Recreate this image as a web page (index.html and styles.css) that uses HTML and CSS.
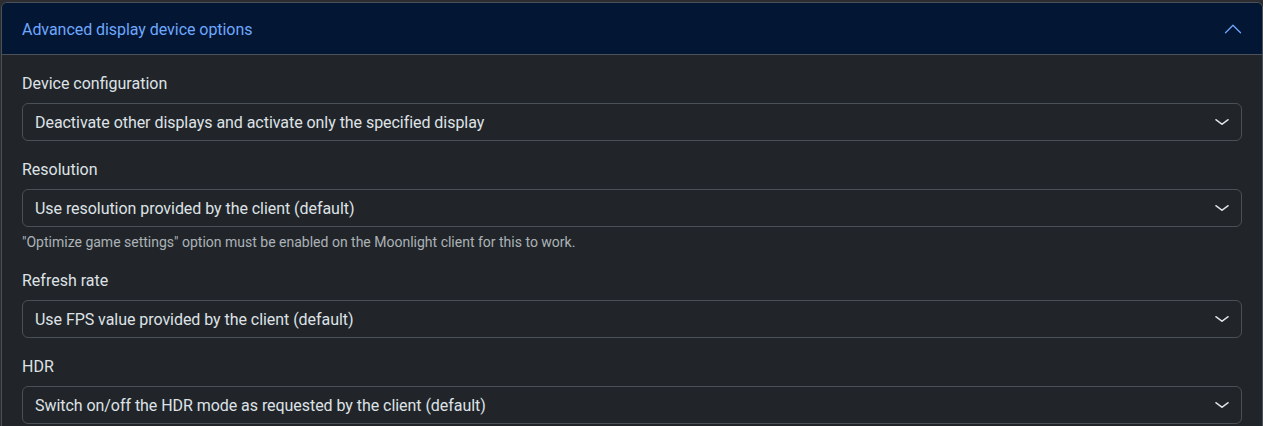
FILE: index.html
```html
<!DOCTYPE html>
<html lang="en">
<head>
<meta charset="utf-8">
<title>Advanced display device options</title>
<link rel="stylesheet" href="styles.css">
</head>
<body>
<div class="accordion-item">
  <div class="accordion-header">
    <span class="accordion-title">Advanced display device options</span>
    <svg class="accordion-icon" viewBox="0 0 16 16" width="20" height="20" fill="none" stroke="#6ea8fe" stroke-linecap="round" stroke-linejoin="round" stroke-width="1"><path d="M2 11L8 5L14 11"/></svg>
  </div>
  <div class="accordion-body">
    <div class="field">
      <div class="form-label">Device configuration</div>
      <div class="form-select"><span class="value">Deactivate other displays and activate only the specified display</span><svg class="chev" viewBox="0 0 16 16" width="16" height="12" preserveAspectRatio="none" fill="none" stroke="#dee2e6" stroke-linecap="round" stroke-linejoin="round" stroke-width="1.7"><path d="m2 5 6 6 6-6"/></svg></div>
    </div>
    <div class="field">
      <div class="form-label">Resolution</div>
      <div class="form-select"><span class="value">Use resolution provided by the client (default)</span><svg class="chev" viewBox="0 0 16 16" width="16" height="12" preserveAspectRatio="none" fill="none" stroke="#dee2e6" stroke-linecap="round" stroke-linejoin="round" stroke-width="1.7"><path d="m2 5 6 6 6-6"/></svg></div>
      <div class="form-text">"Optimize game settings" option must be enabled on the Moonlight client for this to work.</div>
    </div>
    <div class="field">
      <div class="form-label">Refresh rate</div>
      <div class="form-select"><span class="value">Use FPS value provided by the client (default)</span><svg class="chev" viewBox="0 0 16 16" width="16" height="12" preserveAspectRatio="none" fill="none" stroke="#dee2e6" stroke-linecap="round" stroke-linejoin="round" stroke-width="1.7"><path d="m2 5 6 6 6-6"/></svg></div>
    </div>
    <div class="field">
      <div class="form-label">HDR</div>
      <div class="form-select"><span class="value">Switch on/off the HDR mode as requested by the client (default)</span><svg class="chev" viewBox="0 0 16 16" width="16" height="12" preserveAspectRatio="none" fill="none" stroke="#dee2e6" stroke-linecap="round" stroke-linejoin="round" stroke-width="1.7"><path d="m2 5 6 6 6-6"/></svg></div>
    </div>
  </div>
</div>
</body>
</html>
```
FILE: styles.css
```css
html, body {
  margin: 0;
  padding: 0;
  overflow: hidden;
  background: #2b2d30;
}
body {
  padding: 2px 0 0 1px;
  font-family: "Segoe UI", Roboto, "Noto Sans", sans-serif;
  font-size: 16px;
  line-height: 24px;
  color: #dee2e6;
}
.accordion-item {
  width: 1262px;
  box-sizing: border-box;
  border: 1px solid #495057;
  border-radius: 6px;
  background: #212529;
  overflow: hidden;
}
.accordion-header {
  display: flex;
  align-items: center;
  justify-content: space-between;
  height: 51px;
  padding: 0 20px;
  background: #031633;
  color: #6ea8fe;
  border-bottom: 1px solid #495057;
}
.accordion-title {
  line-height: 24px;
  padding-top: 2px;
  letter-spacing: -0.05px;
}
.accordion-icon {
  display: block;
  flex-shrink: 0;
  margin-right: -1px;
}
.accordion-body {
  padding: 16px 20px 20px;
}
.field {
  margin-bottom: 16px;
}
.form-label {
  margin-bottom: 8px;
  padding-top: 1px;
  height: 23px;
  line-height: 24px;
}
.form-select {
  display: flex;
  align-items: center;
  justify-content: space-between;
  height: 38px;
  box-sizing: border-box;
  padding: 0 11px 0 12px;
  border: 1px solid #495057;
  border-radius: 6px;
  background: #212529;
}
.value {
  padding-top: 2px;
  letter-spacing: -0.05px;
}
.chev {
  display: block;
  flex-shrink: 0;
}
.form-text {
  margin-top: 4px;
  padding-top: 1px;
  height: 20px;
  font-size: 14px;
  line-height: 21px;
  color: rgba(222, 226, 230, 0.75);
}
```
